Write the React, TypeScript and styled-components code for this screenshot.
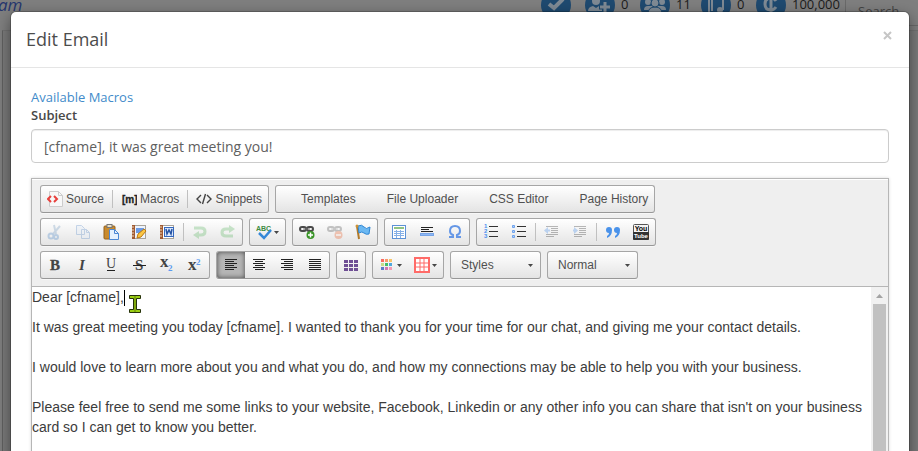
import React from "react";
import styled, { createGlobalStyle, css } from "styled-components";

const Global = createGlobalStyle`
  * { box-sizing: border-box; }
  body { margin: 0; background: #808080; font-family: "Open Sans", sans-serif; color: #333; }
  button, input, select { font: inherit; color: inherit; }
`;

const Screen = styled.div`
  display: grid;
  height: 100vh;
  overflow: hidden;
  grid-template-columns: minmax(0, 1fr);
`;

const Backdrop = styled.div`
  grid-area: 1 / 1;
  display: flex;
  flex-direction: column;
  background: #7f7f7f;
`;

const SiteBar = styled.header`
  display: flex;
  align-items: flex-start;
  justify-content: space-between;
  height: 30px;
`;

const Brand = styled.span`
  margin-left: -2px;
  font-size: 17px;
  font-style: italic;
  line-height: 10px;
  color: #26366e;
`;

const Stats = styled.div`
  display: flex;
  height: 26px;
`;

const Stat = styled.div<{ $width: number }>`
  display: flex;
  gap: 6px;
  width: ${(p) => p.$width}px;
  font-size: 13px;
  line-height: 9px;
  color: #1c1c1c;
  svg { flex: none; margin-top: -10px; }
`;

const SiteSearch = styled.div`
  width: 73px;
  height: 26px;
  padding: 2px 0 0 12px;
  border-left: 1px solid #6a6a6a;
  border-bottom: 1px solid #6a6a6a;
  font-size: 13px;
  line-height: 18px;
  color: #444;
`;

const SiteBody = styled.div`
  flex: 1;
  margin: 0 0 0 2px;
  border-top: 1px solid #727272;
  border-left: 1px solid #606060;
  background: #7b7b7b;
`;

const Modal = styled.section`
  grid-area: 1 / 1;
  align-self: start;
  margin: 12px 9px 0 11px;
  background: #fff;
  border-radius: 5px;
  box-shadow: 0 5px 15px rgba(0, 0, 0, 0.5), 0 0 0 1px rgba(0, 0, 0, 0.2);
`;

const ModalHeader = styled.header`
  display: flex;
  justify-content: space-between;
  align-items: flex-start;
  height: 56px;
  padding: 14px;
  border-bottom: 1px solid #e5e5e5;
`;

const Title = styled.h4`
  margin: 0 1px;
  font-size: 18px;
  font-weight: 400;
  line-height: 26px;
  color: #4c4c4c;
`;

const Close = styled.button`
  display: flex;
  padding: 4px 2px;
  border: 0;
  background: none;
  color: #c6c6c6;
`;

const ModalBody = styled.div`
  padding: 20px;
`;

const MacroLink = styled.a`
  display: block;
  font-size: 13px;
  line-height: 18px;
  color: #428bca;
  text-decoration: none;
`;

const Label = styled.label`
  display: block;
  margin-bottom: 5px;
  font-size: 13px;
  font-weight: 600;
  line-height: 18px;
  color: #484848;
`;

const Subject = styled.input`
  display: block;
  width: 100%;
  height: 34px;
  padding: 6px 12px;
  border: 1px solid #ccc;
  border-radius: 4px;
  font-size: 14px;
  color: #606060;
  box-shadow: inset 0 1px 1px rgba(0, 0, 0, 0.075);
`;

const Editor = styled.div`
  margin-top: 15px;
  border: 1px solid #b6b6b6;
  box-shadow: 0 0 3px rgba(0, 0, 0, 0.15);
  font-family: "Liberation Sans", Arial, sans-serif;
`;

const Toolbar = styled.div`
  display: flex;
  flex-direction: column;
  gap: 5px;
  padding: 6px 8px 7px;
  border-bottom: 1px solid #b6b6b6;
  background: #efefef;
  box-shadow: inset 0 1px 0 #fff;
`;

const ToolRow = styled.div`
  display: flex;
  gap: 6px;
`;

const frame = css`
  height: 28px;
  border: 1px solid #a6a6a6;
  border-bottom-color: #979797;
  border-radius: 3px;
  background: linear-gradient(#fff, #e4e4e4);
  box-shadow: 0 1px 0 rgba(255, 255, 255, 0.5);
`;

const Group = styled.div`
  display: flex;
  align-items: center;
  ${frame}
`;

const Tool = styled.button<{ $on?: boolean; $faded?: boolean; $menu?: boolean }>`
  display: flex;
  align-items: center;
  gap: ${(p) => (p.$menu ? 2 : 3)}px;
  height: 26px;
  padding: 0 6px;
  border: 0;
  border-radius: 2px 0 0 2px;
  background: ${(p) => (p.$on ? "#b5b5b5" : "none")};
  box-shadow: ${(p) => (p.$on ? "inset 0 0 5px rgba(0,0,0,.6)" : "none")};
  font-size: 12px;
  line-height: 16px;
  color: #505050;
  white-space: nowrap;
  svg { flex: none; opacity: ${(p) => (p.$faded ? 0.3 : 1)}; }
`;

const IconSlot = styled.span`
  width: 16px;
`;

const Separator = styled.span`
  width: 1px;
  height: 18px;
  margin: 0 2px;
  background: #c0c0c0;
`;

const Combo = styled.label`
  display: grid;
  align-items: center;
  width: 91px;
  ${frame}
  svg { grid-area: 1 / 1; justify-self: end; margin-right: 7px; pointer-events: none; }
`;

const ComboSelect = styled.select`
  grid-area: 1 / 1;
  width: 100%;
  height: 26px;
  padding: 0 16px 0 10px;
  border: 0;
  appearance: none;
  background: none;
  font-size: 12px;
  color: #505050;
`;

const Content = styled.div`
  display: grid;
  grid-template-columns: minmax(0, 1fr) 17px;
  min-height: 300px;
`;

const Copy = styled.div`
  outline: none;
  font-size: 14px;
  line-height: 20px;
  color: #3c3c3c;
`;

const Paragraph = styled.p<{ $gap: number }>`
  margin: 0 0 ${(p) => p.$gap}px;
`;

const Caret = styled.span`
  display: inline-block;
  width: 1px;
  height: 16px;
  vertical-align: -4px;
  background: #000;
`;

const Pointer = styled.span`
  position: relative;
  svg { position: absolute; left: 4px; top: 6px; }
`;

const ScrollTrack = styled.div`
  display: flex;
  flex-direction: column;
  align-items: center;
  background: #f1f1f1;
  svg { flex: none; }
`;

const ScrollThumb = styled.div`
  flex: 1;
  width: 13px;
  background: #c1c1c1;
`;

const Svg = ({ children, w = 16, h = 16 }: { children: React.ReactNode; w?: number; h?: number }) => (
  <svg width={w} height={h} viewBox={`0 0 ${w} ${h}`} fill="none" aria-hidden="true">{children}</svg>
);

const Badge = ({ children }: { children: React.ReactNode }) => (
  <svg width="30" height="30" viewBox="0 0 30 30" fill="none" aria-hidden="true">
    <circle cx="15" cy="15" r="15" fill="#1f4a70" />
    {children}
  </svg>
);

const pale = "#7f8a94";

const badges = {
  check: <Badge><path d="M8 14l5 4 9-9" stroke={pale} strokeWidth="4" /></Badge>,
  add: <Badge><g fill={pale}><circle cx="11" cy="11" r="4" /><path d="M3 21q0-4 5-5l3 2 3-2 3 2v3z" /></g><path d="M20 11v11M14 17h11" stroke="#1f4a70" strokeWidth="5" /><path d="M20 12v10M15 17h10" stroke={pale} strokeWidth="3" /></Badge>,
  people: <Badge><g fill={pale}><circle cx="8" cy="12" r="3" /><circle cx="22" cy="12" r="3" /><path d="M4 20q0-4 4-4h14q4 0 4 4z" /><path d="M8 24q0-7 7-7t7 7z" stroke="#1f4a70" /><circle cx="15" cy="13" r="4" stroke="#1f4a70" /></g></Badge>,
  note: <Badge><path d="M8 5v17M11 21V7M22 6v14" stroke={pale} strokeWidth="2" /><circle cx="19" cy="20" r="3" fill={pale} /></Badge>,
  coin: <Badge><path d="M20 11q-2-3-5-3-6 0-6 6t6 6q3 0 5-3M15 5v19" stroke={pale} strokeWidth="3" /></Badge>,
};

const Down = () => <Svg w={5} h={3}><path d="M0 0h5L2.500 3z" fill="#474747" /></Svg>;

const bars = (rows: [number, number][]) => (
  <Svg>{rows.map(([x, w], i) => <rect key={i} x={x} y={2 + i * 2} width={w} height="1" fill="#222" />)}</Svg>
);

const serif = { fontFamily: '"Liberation Serif", serif', fontWeight: 700, fill: "#444" };

const icon = {
  source: <Svg><path d="M2.500.5h9l4 4v11h-13z" fill="#f8f8f8" stroke="#ccc" /><path d="M11.500.5v4h4" stroke="#ccc" /><path d="M4 5L1 8l3 3M7 5l3 3-3 3" stroke="#e8403c" strokeWidth="2" /></Svg>,
  macros: <Svg><text x="1" y="12" fontFamily="Liberation Sans" fontSize="10" fontWeight="700" fill="#222" stroke="#222" strokeWidth="0.300">[m]</text></Svg>,
  snippets: <Svg><path d="M5 4L1 8l4 4M11 4l4 4-4 4M9.500 3l-3 10" stroke="#444" strokeWidth="1.400" /></Svg>,
  cut: <Svg><path d="M7 1l2 9M13 2L6 10" stroke="#6b95bd" strokeWidth="2" /><circle cx="4" cy="12" r="2.500" stroke="#3f7fc4" strokeWidth="2" /><circle cx="9" cy="13" r="2" stroke="#3f7fc4" strokeWidth="2" /></Svg>,
  copy: <Svg><path d="M1.500 1.500h5l3 3v6h-8zM6.500 5.500h5l3 3v6h-8z" fill="#dfeaf8" stroke="#4f83c4" /><path d="M11.500 5.500v3h3" stroke="#4f83c4" /></Svg>,
  paste: <Svg><rect x="1" y="2" width="11" height="13" rx="1" fill="#c98b2e" stroke="#94601c" /><rect x="4" y="0.500" width="5" height="3" fill="#e8e0c8" stroke="#777" /><path d="M6.500 5.500h5l4 4v6h-9z" fill="#e6f1fe" stroke="#4c87d4" /><path d="M11.500 5.500v4h4" stroke="#4c87d4" /></Svg>,
  pasteText: <Svg><rect x="2.500" y="1.500" width="12" height="13" fill="#eef3fb" stroke="#a9a39a" /><rect x="1" y="1" width="3" height="14" fill="#a05a32" /><path d="M1 3h2M1 6h2M1 9h2M1 12h2" stroke="#ecd4b8" /><path d="M5 4h8v5H5z" fill="#6c9be4" /><path d="M6 14l1-4 6-5 2 2-5 6z" fill="#fbc643" stroke="#bd7912" /></Svg>,
  pasteWord: <Svg><rect x="2.500" y="1.500" width="12" height="13" fill="#fff" stroke="#a9a39a" /><rect x="1" y="1" width="3" height="14" fill="#a05a32" /><path d="M1 3h2M1 6h2M1 9h2M1 12h2" stroke="#ecd4b8" /><rect x="5.500" y="3.500" width="9" height="9" fill="#dce8fb" stroke="#3568bd" /><path d="M7 5l1 5 2-4 2 4 1-5" stroke="#2553a4" strokeWidth="1.500" /></Svg>,
  undo: <Svg><path d="M2 4h7q4 0 4 3.500T9 11H6" stroke="#57b45c" strokeWidth="3" /><path d="M7 7v8l-6-4z" fill="#57b45c" /></Svg>,
  redo: <Svg><path d="M13 12H6q-4 0-4-3.500T6 5h4" stroke="#57b45c" strokeWidth="3" /><path d="M9 1v8l6-4z" fill="#57b45c" /></Svg>,
  spell: <Svg><text x="0" y="7" fontFamily="Liberation Sans" fontSize="7" fontWeight="700" fill="#3d8c41">ABC</text><path d="M3 9l5 5 7-8" stroke="#3588d8" strokeWidth="2.500" /></Svg>,
  link: <Svg><g stroke="#4a4a4a" strokeWidth="2"><rect x="1" y="3" width="6" height="4" rx="2" /><rect x="8" y="3" width="6" height="4" rx="2" /></g><path d="M4 5h7" stroke="#777" /><circle cx="11.500" cy="11" r="4" fill="#3a9427" /><path d="M11.500 8.500v5M9 11h5" stroke="#fff" strokeWidth="1.500" /></Svg>,
  unlink: <Svg><g stroke="#4a4a4a" strokeWidth="2"><rect x="1" y="3" width="6" height="4" rx="2" /><rect x="8" y="3" width="6" height="4" rx="2" /></g><path d="M4 5h7" stroke="#777" /><circle cx="11.500" cy="11" r="4" fill="#e8571f" /><path d="M9 11h5" stroke="#fff" strokeWidth="1.500" /></Svg>,
  flag: <Svg><path d="M2 2l2 13" stroke="#b27a2a" strokeWidth="2" /><path d="M3 2q4-2 6 1t6 0l-1 7q-3 1-5-1t-5 0z" fill="#6bb8f2" stroke="#2e86d4" /><circle cx="2" cy="2" r="1.500" fill="#cf9335" /></Svg>,
  table: <Svg><rect x="1.500" y="1.500" width="13" height="13" fill="#fff" stroke="#5d92d6" /><path d="M3 4h10" stroke="#90c383" strokeWidth="2" /><path d="M3 7.500h10M3 9.500h10M3 11.500h10M5.500 6v8M9.500 6v8" stroke="#86b0e6" /></Svg>,
  rule: <Svg><path d="M2 3.500h12M2 5.500h8M2 7.500h12" stroke="#222" /><rect x="1.500" y="9.500" width="13" height="2" fill="#8eb8f4" stroke="#78a5e8" /></Svg>,
  omega: <Svg><path d="M2 13h4v-2Q3 10 3 7q0-5 5-5t5 5q0 3-3 4v2h4" stroke="#6597e6" strokeWidth="2" /></Svg>,
  numbers: <Svg><path d="M6 2.500h9M6 7.500h9M6 12.500h9" stroke="#333" /><g fontFamily="Liberation Sans" fontSize="6" fontWeight="700" fill="#4b8fee"><text x="1" y="4">1</text><text x="1" y="9">2</text><text x="1" y="14">3</text></g></Svg>,
  bullets: <Svg><path d="M6 2.500h9M6 7.500h9M6 12.500h9" stroke="#333" /><path d="M1.500 1.500h2v2h-2zM1.500 6.500h2v2h-2zM1.500 11.500h2v2h-2z" fill="#b7d3f8" stroke="#6da2ee" /></Svg>,
  outdent: <Svg><path d="M2 2.500h12M7 4.500h7M7 6.500h7M7 8.500h7M2 10.500h12M2 12.500h8" stroke="#222" /><path d="M6 6.500H3" stroke="#3b86e8" strokeWidth="2" /><path d="M4 3v7L0 6.500z" fill="#3b86e8" /></Svg>,
  indent: <Svg><path d="M2 2.500h12M7 4.500h7M7 6.500h7M7 8.500h7M2 10.500h12M2 12.500h8" stroke="#222" /><path d="M1 6.500h3" stroke="#3b86e8" strokeWidth="2" /><path d="M2 3v7l4-3.500z" fill="#3b86e8" /></Svg>,
  quote: <Svg><path d="M7 6q0 6-5 8v-2q2-1 2-3-3 0-3-3t3-3 3 3M15 6q0 6-5 8v-2q2-1 2-3-3 0-3-3t3-3 3 3" fill="#4a92ea" /></Svg>,
  youtube: <Svg><rect x="0.500" y="0.500" width="15" height="15" rx="1" fill="#f4f4f4" stroke="#555" /><rect x="0" y="8" width="16" height="8" rx="1" fill="#333" /><g fontFamily="Liberation Sans" fontWeight="700" textAnchor="middle"><text x="8" y="7" fontSize="7" fill="#000">You</text><text x="8" y="14" fontSize="6" fill="#fff">Tube</text></g></Svg>,
  bold: <Svg><text x="3" y="13" fontSize="15" {...serif} stroke="#444" strokeWidth="0.300">B</text></Svg>,
  italic: <Svg><text x="4" y="13" fontSize="15" fontStyle="italic" {...serif}>I</text></Svg>,
  underline: <Svg><text x="3" y="11" fontSize="14" {...serif} fontWeight={400}>U</text><path d="M4 13.500h8" stroke="#222" /></Svg>,
  strike: <Svg><text x="4" y="13" fontSize="15" {...serif}>S</text><path d="M2 8.500h13" stroke="#222" /></Svg>,
  sub: <Svg><text x="1" y="10" fontSize="17" {...serif}>x</text><text x="9" y="14" fontSize="9" {...serif} fill="#5b9cf0">2</text></Svg>,
  sup: <Svg><text x="1" y="13" fontSize="17" {...serif}>x</text><text x="9" y="8" fontSize="9" {...serif} fill="#5b9cf0">2</text></Svg>,
  left: bars([[2, 12], [2, 9], [2, 12], [2, 9], [2, 12], [2, 9]]),
  center: bars([[2, 12], [4, 8], [2, 12], [4, 8], [2, 12], [4, 8]]),
  right: bars([[2, 12], [5, 9], [2, 12], [5, 9], [2, 12], [5, 9]]),
  justify: bars([[2, 12], [2, 12], [2, 12], [2, 12], [2, 12], [2, 12]]),
  grid: <Svg>{[1, 6, 11].map((x) => [3, 7, 11].map((y) => <rect key={`${x}-${y}`} x={x} y={y} width="4" height="3" fill="#6f4f94" />))}</Svg>,
  palette: <Svg>{["#fa6b62", "#fb9a6b", "#f6c56a", "#c8dc8c", "#47bd68", "#4fa7dc", "#5a7bc8", "#d078b4", "#f39ab4"].map((c, i) => <rect key={c} x={2 + (i % 3) * 4} y={2 + Math.floor(i / 3) * 4} width="3" height="3" fill={c} />)}</Svg>,
  redTable: <Svg><rect x="1" y="1" width="14" height="14" fill="#fff" stroke="#ff6b68" strokeWidth="2" /><path d="M6 1v14M10 1v14M1 6h14M1 10h14" stroke="#ff6b68" /></Svg>,
};

type IconName = keyof typeof icon;

const IconTool = ({ name, on, faded, menu }: { name: IconName; on?: boolean; faded?: boolean; menu?: boolean }) => (
  <Tool type="button" aria-label={name} aria-pressed={on} $on={on} $faded={faded} $menu={menu}>
    {icon[name]}
    {menu && <Down />}
  </Tool>
);

const Picker = ({ label }: { label: string }) => (
  <Combo>
    <ComboSelect aria-label={label}><option>{label}</option></ComboSelect>
    <Down />
  </Combo>
);

export default function App() {
  return (
    <>
      <Global />
      <Screen>
        <Backdrop>
          <SiteBar>
            <Brand>am</Brand>
            <Stats>
              <Stat $width={44}>{badges.check}</Stat>
              <Stat $width={55}>{badges.add}0</Stat>
              <Stat $width={61}>{badges.people}11</Stat>
              <Stat $width={55}>{badges.note}0</Stat>
              <Stat $width={89}>{badges.coin}100,000</Stat>
              <SiteSearch>Search</SiteSearch>
            </Stats>
          </SiteBar>
          <SiteBody />
        </Backdrop>
        <Modal role="dialog" aria-labelledby="title">
          <ModalHeader>
            <Title id="title">Edit Email</Title>
            <Close type="button" aria-label="Close">
              <Svg w={11} h={11}><path d="M2 2l7 7M9 2l-7 7" stroke="currentColor" strokeWidth="2" /></Svg>
            </Close>
          </ModalHeader>
          <ModalBody>
            <MacroLink href="#macros">Available Macros</MacroLink>
            <Label htmlFor="subject">Subject</Label>
            <Subject id="subject" defaultValue="[cfname], it was great meeting you!" />
            <Editor>
              <Toolbar role="toolbar">
                <ToolRow>
                  <Group>
                    <Tool type="button">{icon.source}Source</Tool>
                    <Separator />
                    <Tool type="button">{icon.macros}Macros</Tool>
                    <Separator />
                    <Tool type="button">{icon.snippets}Snippets</Tool>
                  </Group>
                  <Group>
                    {["Templates", "File Uploader", "CSS Editor", "Page History"].map((t) => (
                      <Tool type="button" key={t}><IconSlot />{t}</Tool>
                    ))}
                  </Group>
                </ToolRow>
                <ToolRow>
                  <Group>
                    <IconTool name="cut" faded />
                    <IconTool name="copy" faded />
                    <IconTool name="paste" />
                    <IconTool name="pasteText" />
                    <IconTool name="pasteWord" />
                    <Separator />
                    <IconTool name="undo" faded />
                    <IconTool name="redo" faded />
                  </Group>
                  <Group><IconTool name="spell" menu /></Group>
                  <Group>
                    <IconTool name="link" />
                    <IconTool name="unlink" faded />
                    <IconTool name="flag" />
                  </Group>
                  <Group>
                    <IconTool name="table" />
                    <IconTool name="rule" />
                    <IconTool name="omega" />
                  </Group>
                  <Group>
                    <IconTool name="numbers" />
                    <IconTool name="bullets" />
                    <Separator />
                    <IconTool name="outdent" faded />
                    <IconTool name="indent" faded />
                    <Separator />
                    <IconTool name="quote" />
                    <IconTool name="youtube" />
                  </Group>
                </ToolRow>
                <ToolRow>
                  <Group>
                    <IconTool name="bold" />
                    <IconTool name="italic" />
                    <IconTool name="underline" />
                    <IconTool name="strike" />
                    <IconTool name="sub" />
                    <IconTool name="sup" />
                  </Group>
                  <Group>
                    <IconTool name="left" on />
                    <IconTool name="center" />
                    <IconTool name="right" />
                    <IconTool name="justify" />
                  </Group>
                  <Group><IconTool name="grid" /></Group>
                  <Group>
                    <IconTool name="palette" menu />
                    <IconTool name="redTable" menu />
                  </Group>
                  <Picker label="Styles" />
                  <Picker label="Normal" />
                </ToolRow>
              </Toolbar>
              <Content>
                <Copy role="textbox" aria-label="Email body" aria-multiline="true" contentEditable suppressContentEditableWarning>
                  <Paragraph $gap={10}>
                    Dear [cfname],<Caret />
                    <Pointer>
                      <Svg w={12} h={18}>
                        <path d="M.5.5h11v3h-4v11h4v3H.5v-3h4v-11h-4z" fill="#7fa80c" stroke="#26320a" />
                        <path d="M1 2h4M7 2h4M1 16h4M7 16h4" stroke="#b7f51c" />
                      </Svg>
                    </Pointer>
                  </Paragraph>
                  <Paragraph $gap={20}>It was great meeting you today [cfname]. I wanted to thank you for your time for our chat, and giving me your contact details.</Paragraph>
                  <Paragraph $gap={20}>I would love to learn more about you and what you do, and how my connections may be able to help you with your business.</Paragraph>
                  <Paragraph $gap={20}>Please feel free to send me some links to your website, Facebook, Linkedin or any other info you can share that isn't on your business card so I can get to know you better.</Paragraph>
                </Copy>
                <ScrollTrack>
                  <Svg w={17} h={17}><path d="M5 11l3.500-4 3.500 4z" fill="#a3a3a3" /></Svg>
                  <ScrollThumb />
                </ScrollTrack>
              </Content>
            </Editor>
          </ModalBody>
        </Modal>
      </Screen>
    </>
  );
}
